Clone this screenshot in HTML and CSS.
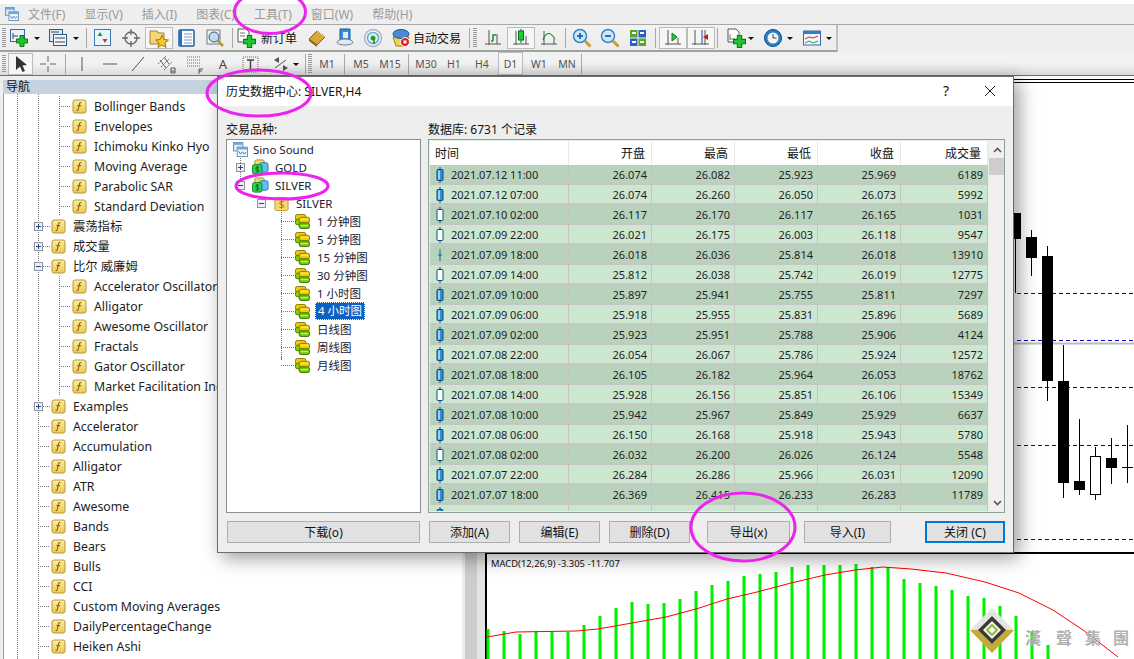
FILE: index.html
```html
<!DOCTYPE html>
<html lang="zh">
<head>
<meta charset="utf-8">
<title>MetaTrader</title>
<link rel="stylesheet" href="styles.css">
</head>
<body>
<svg class="defs" width="0" height="0">
  <defs><linearGradient id="gold" x1="0" y1="0" x2="0" y2="1"><stop offset="0" stop-color="#fbeea0"/><stop offset="1" stop-color="#ecc94e"/></linearGradient></defs>
  <symbol id="fx" viewBox="0 0 15 15"><rect x="1" y="1" width="13" height="13" rx="2" fill="url(#gold)" stroke="#b8963a"/><path d="M9.500 3.700C8 3 7.600 4 7.300 5.500L6.400 10C6.200 11.300 5.600 11.700 4.600 11.300M5.500 6.600H9" fill="none" stroke="#8a6414" stroke-width="1.100"/></symbol>
  <symbol id="plus" viewBox="0 0 9 9"><rect x=".5" y=".5" width="8" height="8" fill="#eef0f4" stroke="#8d949c"/><path d="M2 4.500H7M4.500 2V7" stroke="#28408c"/></symbol>
  <symbol id="minus" viewBox="0 0 9 9"><rect x=".5" y=".5" width="8" height="8" fill="#eef0f4" stroke="#8d949c"/><path d="M2 4.500H7" stroke="#28408c"/></symbol>
  <symbol id="db" viewBox="0 0 16 16"><rect x=".5" y=".5" width="11" height="6" rx="2" fill="#f0cc00" stroke="#8a7400"/><rect x=".5" y="5.500" width="11" height="6" rx="2" fill="#80d000" stroke="#4c7a00"/><rect x="4.500" y="3.500" width="11" height="6" rx="2" fill="#f0cc00" stroke="#8a7400"/><path d="M6 5.500H14" stroke="#fff0a0"/><rect x="4.500" y="9.500" width="11" height="6" rx="2" fill="#70c800" stroke="#3f7000"/><path d="M6 12.500H14" stroke="#e0f8b0"/></symbol>
  <symbol id="multi" viewBox="0 0 18 16"><rect x="3" y="0.500" width="10" height="9" rx="2" fill="#f3d970" stroke="#a58a30"/><rect x="8" y="3.500" width="9" height="10" rx="2" fill="#5cc0f0" stroke="#2878b0"/><rect x="0.500" y="5.500" width="10" height="10" rx="2" fill="#30d050" stroke="#108030"/><path d="M7.400 8.400C6 7.500 4 8 4 9.300C4 11 7.400 10 7.400 11.900C7.400 13 5.300 13.400 3.800 12.600M5.500 7V14" fill="none" stroke="#063"/></symbol>
  <symbol id="dollar" viewBox="0 0 16 16"><path d="M3 1.500H13V3.500H15V14C15 15 14 15.500 13 15.500H3C2 15.500 1 15 1 14V3.500H3Z" fill="#f8d868" stroke="#c09a30"/><path d="M10.500 6.500C9 5.500 6 6 6 7.800C6 10 10.500 8.800 10.500 11C10.500 12.500 7.500 12.800 5.800 11.800M8 5V13.500" fill="none" stroke="#a07010"/></symbol>
  <symbol id="srv" viewBox="0 0 16 16"><rect x=".5" y=".5" width="10" height="9" fill="#dcecf8" stroke="#5a90c0"/><rect x=".5" y=".5" width="10" height="2.500" fill="#70a8dc"/><rect x="4.500" y="5.500" width="11" height="10" fill="#f0f6fc" stroke="#5a90c0"/><rect x="4.500" y="5.500" width="11" height="2.500" fill="#70a8dc"/><path d="M6 10L8 13L10 10.500L12 13L14 10.500" fill="none" stroke="#4070a0"/></symbol>
  <symbol id="cb" viewBox="0 0 8 16"><path d="M4 0V16" stroke="#0b4a78"/><rect x="1" y="2.500" width="6" height="11" rx="1" fill="#2f8fd8" stroke="#0b4a78"/><rect x="2" y="3.500" width="2" height="9" fill="#9fd0f4"/></symbol>
  <symbol id="cw" viewBox="0 0 8 16"><path d="M4 0V16" stroke="#0b4a78"/><rect x="1" y="2.500" width="6" height="11" rx="1" fill="#fff" stroke="#0b4a78"/></symbol>
  <symbol id="cd" viewBox="0 0 8 16"><path d="M4 2V14M2 8H6" stroke="#0b6a98"/></symbol>
  <symbol id="gplus" viewBox="0 0 12 12"><path d="M4 .5H8V4H11.500V8H8V11.500H4V8H.5V4H4Z" fill="#1fc42f" stroke="#0a7a1a"/></symbol>
</svg>

<div class="app">
  <div class="strip"></div>
  <div class="menu">
    <svg class="appico"><use href="#srv"/></svg>
    <span>文件(F)</span><span>显示(V)</span><span>插入(I)</span><span>图表(C)</span><span>工具(T)</span><span>窗口(W)</span><span>帮助(H)</span>
  </div>

  <div class="tb1">
    <div class="bar1">
      <i class="grip"></i>
      <div class="ti w22"><svg class="ic" viewBox="0 0 20 20"><rect x="1.500" y="1.500" width="14" height="12" fill="#e8f0f8" stroke="#3a6ea0"/><path d="M4 8H9M4 5V11" stroke="#444"/><use href="#gplus" x="7" y="7" width="12" height="12"/></svg></div>
      <div class="ta w14"></div>
      <div class="ti"><svg class="ic" viewBox="0 0 20 20"><rect x="1.500" y="1.500" width="13" height="12" fill="#dceaf8" stroke="#2a5a90"/><rect x="5.500" y="6.500" width="13" height="11" fill="#f0f6fc" stroke="#2a5a90"/><path d="M3 4H11M7 10H17M7 14H17" stroke="#444"/></svg></div>
      <div class="ta w8"></div>
      <i class="sep ml6"></i>
      <div class="ti ml2"><svg class="ic" viewBox="0 0 20 20"><rect x="1.500" y="1.500" width="16" height="16" fill="#eaf4fc" stroke="#3a7ab8"/><path d="M7 4L4.500 8H9.500Z" fill="#18a030"/><path d="M12 15L9.500 11H14.500Z" fill="#d83020"/></svg></div>
      <div class="ti"><svg class="ic" viewBox="0 0 20 20"><circle cx="10" cy="10" r="6" fill="none" stroke="#666" stroke-width="1.300"/><path d="M10 1V7M10 13V19M1 10H7M13 10H19" stroke="#666" stroke-width="1.300"/></svg></div>
      <div class="ti on"><svg class="ic" viewBox="0 0 20 20"><path d="M1 3H8L9 5H15V16H1Z" fill="#f4d878" stroke="#a08030"/><path d="M13 7L15 11.500L19.500 12L16 15L17 19.500L13 17L9 19.500L10 15L6.500 12L11 11.500Z" fill="#f6c830" stroke="#a07810"/></svg></div>
      <div class="ti"><svg class="ic" viewBox="0 0 20 20"><rect x="2" y="2" width="15" height="16" rx="1" fill="#fff" stroke="#1a5ca8" stroke-width="1.500"/><rect x="2" y="2" width="3" height="16" fill="#2a70c0"/><path d="M7 6H15M7 9H15M7 12H15M7 15H15" stroke="#7a9ac0"/></svg></div>
      <div class="ti"><svg class="ic" viewBox="0 0 20 20"><rect x="2" y="2" width="13" height="14" fill="#eef2f6" stroke="#778"/><circle cx="9" cy="9" r="5" fill="#bcdcf0" stroke="#456"/><path d="M12.500 12.500L18 18" stroke="#b89a30" stroke-width="2.500"/></svg></div>
      <i class="sep ml3"></i>
      <div class="ti w22 ml2"><svg class="ic" viewBox="0 0 20 20"><path d="M2 1H10L13 4V14H2Z" fill="#fff" stroke="#555"/><path d="M4 5H9M4 8H9" stroke="#777"/><use href="#gplus" x="7" y="7" width="13" height="13"/></svg></div>
      <span class="tx ml4 w36">新订单</span>
      <div class="ti ml6"><svg class="ic" viewBox="0 0 20 20"><path d="M2 11L10 3L18 9L10 17Z" fill="#d8a838" stroke="#7a5a10"/><path d="M2 11L10 17V19L2 13Z" fill="#8a6414"/><path d="M10 3L18 9" stroke="#f4dc90"/></svg></div>
      <div class="ti"><svg class="ic" viewBox="0 0 20 20"><path d="M5 1H15V13H5Z" fill="#3a8ad8" stroke="#1a5a98"/><rect x="8" y="4" width="5" height="6" fill="#dceefa"/><path d="M2 14C4 10 16 10 18 14C18 18 2 18 2 14Z" fill="#e0e8f0" stroke="#708090"/></svg></div>
      <div class="ti"><svg class="ic" viewBox="0 0 20 20"><circle cx="10" cy="10" r="8.500" fill="none" stroke="#a8b8c8" stroke-width="1.500"/><circle cx="10" cy="10" r="5.500" fill="none" stroke="#60b0d0" stroke-width="1.500"/><circle cx="10" cy="10" r="2.500" fill="#28a040"/><path d="M11 10V16" stroke="#208030" stroke-width="1.500"/></svg></div>
      <div class="ti w22 ml3"><svg class="ic" viewBox="0 0 20 20"><path d="M2 9H18L15 18H5Z" fill="#f4d050" stroke="#a08020"/><ellipse cx="10" cy="6" rx="8" ry="4.500" fill="#4a8ad0" stroke="#205a98"/><circle cx="14" cy="14" r="4.500" fill="#e02020" stroke="#fff"/><rect x="12.500" y="12.500" width="3" height="3" fill="#fff"/></svg></div>
      <span class="tx ml1 w48">自动交易</span>
      <i class="sep ml8"></i>
      <i class="grip ml3"></i>
      <div class="ti ml0"><svg class="ic" viewBox="0 0 20 20"><path d="M6 2V17M2 16H18M14 6V16" stroke="#555" fill="none"/><path d="M10 13V7H13M10 13H8" stroke="#1a8a30" stroke-width="1.500" fill="none"/></svg></div>
      <div class="ti on"><svg class="ic" viewBox="0 0 20 20"><path d="M5 3V17M2 16H18M15 8V16" stroke="#555" fill="none"/><path d="M10 1V15" stroke="#0a6a20"/><rect x="7.500" y="3" width="5" height="9" fill="#18d038" stroke="#0a6a20"/></svg></div>
      <div class="ti"><svg class="ic" viewBox="0 0 20 20"><path d="M5 3V17M2 16H18M15 11V16" stroke="#555" fill="none"/><path d="M4 12C7 4 11 3 16 11" stroke="#1a8a30" stroke-width="1.200" fill="none"/></svg></div>
      <i class="sep ml2"></i>
      <div class="ti ml2"><svg class="ic" viewBox="0 0 20 20"><circle cx="8" cy="8" r="6.500" fill="#cfe6f8" stroke="#3a86c8" stroke-width="1.500"/><path d="M5 8H11M8 5V11" stroke="#2a70b8" stroke-width="2"/><path d="M13 13L18.500 18.500" stroke="#c8a030" stroke-width="3"/></svg></div>
      <div class="ti"><svg class="ic" viewBox="0 0 20 20"><circle cx="8" cy="8" r="6.500" fill="#cfe6f8" stroke="#3a86c8" stroke-width="1.500"/><path d="M5 8H11" stroke="#2a70b8" stroke-width="2"/><path d="M13 13L18.500 18.500" stroke="#c8a030" stroke-width="3"/></svg></div>
      <div class="ti"><svg class="ic" viewBox="0 0 20 20"><rect x="2" y="2" width="7.500" height="7.500" fill="#58a828"/><rect x="10.500" y="2" width="7.500" height="7.500" fill="#2a60c8"/><rect x="2" y="10.500" width="7.500" height="7.500" fill="#2a60c8"/><rect x="10.500" y="10.500" width="7.500" height="7.500" fill="#58a828"/><path d="M4 5H8M12 5H16M4 14H8M12 14H16" stroke="#fff" stroke-width="2"/></svg></div>
      <i class="sep ml3"></i>
      <div class="ti on ml3"><svg class="ic" viewBox="0 0 20 20"><path d="M5 2V17M2 16H18M15 10V16" stroke="#555" fill="none"/><path d="M9 5L14 9L9 13Z" fill="#30c040" stroke="#187a28"/></svg></div>
      <div class="ti on"><svg class="ic" viewBox="0 0 20 20"><path d="M4 2V17M1 16H18M14 2V17" stroke="#555" fill="none"/><path d="M11 2V16" stroke="#2040a0"/><path d="M12 9L17 6V12Z" fill="#c82010"/></svg></div>
      <i class="sep ml2"></i>
      <div class="ti w22 ml7"><svg class="ic" viewBox="0 0 20 20"><path d="M2 1H10L13 4V14H2Z" fill="#fff" stroke="#555"/><path d="M4 6V12M4 11H9" stroke="#777"/><use href="#gplus" x="7" y="7" width="13" height="13"/></svg></div>
      <div class="ta w8"></div>
      <div class="ti w22 ml7"><svg class="ic" viewBox="0 0 20 20"><circle cx="10" cy="10" r="8.500" fill="#2a80c8" stroke="#0a4a88"/><circle cx="10" cy="10" r="5.500" fill="#f4f4f4"/><path d="M10 6V10H13.500" stroke="#444" fill="none"/></svg></div>
      <div class="ta w12"></div>
      <div class="ti w22 ml5"><svg class="ic" viewBox="0 0 20 20"><rect x="1.500" y="3" width="17" height="14" fill="#f2f6fa" stroke="#3a6aa0"/><rect x="1.500" y="3" width="17" height="3" fill="#3a7ac8"/><path d="M3 11L7 9L11 10L16 8" stroke="#c83020" fill="none"/><path d="M3 15L7 13L11 15L16 13" stroke="#30a040" fill="none"/></svg></div>
      <div class="ta w12"></div>
    </div>
  </div>

  <div class="tb2">
    <i class="grip g2"></i>
    <div class="ti w25 on"><svg class="ic" viewBox="0 0 20 20"><path d="M5 2L5 16L9 12.500L11.500 18L14 17L11.500 11.500L16 11Z" fill="#333"/></svg></div>
    <div class="ti ml1"><svg class="ic" viewBox="0 0 20 20"><path d="M10 2V8M10 12V18M2 10H8M12 10H18" stroke="#666"/></svg></div>
    <i class="sep ml3"></i>
    <div class="ti ml2"><svg class="ic" viewBox="0 0 20 20"><path d="M10 3V17" stroke="#555"/></svg></div>
    <div class="ti"><svg class="ic" viewBox="0 0 20 20"><path d="M3 10H17" stroke="#555"/></svg></div>
    <div class="ti"><svg class="ic" viewBox="0 0 20 20"><path d="M4 17L16 3" stroke="#555"/></svg></div>
    <div class="ti ml1"><svg class="ic" viewBox="0 0 20 20"><path d="M1 10L9 2M4 13L12 5M7 16L15 8" stroke="#666" stroke-dasharray="2 1"/><path d="M3 6L9 14M7 3L12 10" stroke="#666"/><path d="M14 17H18M14 14H18V19H14Z" fill="none" stroke="#555"/></svg></div>
    <div class="ti"><svg class="ic" viewBox="0 0 20 20"><path d="M2 3H16M2 6H16M2 9H16M2 12H16" stroke="#666" stroke-dasharray="1 1"/><path d="M14 15H18M14 15V20M14 17H17" fill="none" stroke="#555"/></svg></div>
    <div class="ti glyph">A</div>
    <div class="ti"><svg class="ic" viewBox="0 0 20 20"><rect x="2" y="3" width="15" height="15" fill="none" stroke="#666" stroke-dasharray="1 1"/><path d="M6 6H13M9.500 6V15" stroke="#444" stroke-width="1.500"/></svg></div>
    <div class="ti w20 ml6"><svg class="ic" viewBox="0 0 20 20"><path d="M3 6L8 3L8 9ZM12 11L17 14L12 17Z" fill="#555"/><path d="M4 14L15 6" stroke="#555"/></svg></div>
    <div class="ta w10"></div>
    <i class="sep ml4"></i>
    <i class="grip gn ml2"></i>
    <div class="tf ml1">M1</div>
    <i class="sep ml3"></i>
    <div class="tf ml2">M5</div>
    <div class="tf ml1">M15</div>
    <i class="sep ml4"></i>
    <div class="tf ml3">M30</div>
    <div class="tf">H1</div>
    <div class="tf">H4</div>
    <div class="tf w25 on ml2">D1</div>
    <div class="tf ml2">W1</div>
    <div class="tf">MN</div>
    <i class="sep"></i>
  </div>

  <div class="main">
    <aside class="nav">
      <div class="navhead">导航</div>
      <div class="tree">
        <div class="row child"><svg class="fx"><use href="#fx"/></svg><span>Bollinger Bands</span></div>
        <div class="row child"><svg class="fx"><use href="#fx"/></svg><span>Envelopes</span></div>
        <div class="row child"><svg class="fx"><use href="#fx"/></svg><span>Ichimoku Kinko Hyo</span></div>
        <div class="row child"><svg class="fx"><use href="#fx"/></svg><span>Moving Average</span></div>
        <div class="row child"><svg class="fx"><use href="#fx"/></svg><span>Parabolic SAR</span></div>
        <div class="row child"><svg class="fx"><use href="#fx"/></svg><span>Standard Deviation</span></div>
        <div class="row group"><svg class="ex"><use href="#plus"/></svg><svg class="fx"><use href="#fx"/></svg><span>震荡指标</span></div>
        <div class="row group"><svg class="ex"><use href="#plus"/></svg><svg class="fx"><use href="#fx"/></svg><span>成交量</span></div>
        <div class="row group"><svg class="ex"><use href="#minus"/></svg><svg class="fx"><use href="#fx"/></svg><span>比尔 威廉姆</span></div>
        <div class="row child"><svg class="fx"><use href="#fx"/></svg><span>Accelerator Oscillator</span></div>
        <div class="row child"><svg class="fx"><use href="#fx"/></svg><span>Alligator</span></div>
        <div class="row child"><svg class="fx"><use href="#fx"/></svg><span>Awesome Oscillator</span></div>
        <div class="row child"><svg class="fx"><use href="#fx"/></svg><span>Fractals</span></div>
        <div class="row child"><svg class="fx"><use href="#fx"/></svg><span>Gator Oscillator</span></div>
        <div class="row child"><svg class="fx"><use href="#fx"/></svg><span>Market Facilitation Index</span></div>
        <div class="row group"><svg class="ex"><use href="#plus"/></svg><svg class="fx"><use href="#fx"/></svg><span>Examples</span></div>
        <div class="row leaf"><svg class="fx"><use href="#fx"/></svg><span>Accelerator</span></div>
        <div class="row leaf"><svg class="fx"><use href="#fx"/></svg><span>Accumulation</span></div>
        <div class="row leaf"><svg class="fx"><use href="#fx"/></svg><span>Alligator</span></div>
        <div class="row leaf"><svg class="fx"><use href="#fx"/></svg><span>ATR</span></div>
        <div class="row leaf"><svg class="fx"><use href="#fx"/></svg><span>Awesome</span></div>
        <div class="row leaf"><svg class="fx"><use href="#fx"/></svg><span>Bands</span></div>
        <div class="row leaf"><svg class="fx"><use href="#fx"/></svg><span>Bears</span></div>
        <div class="row leaf"><svg class="fx"><use href="#fx"/></svg><span>Bulls</span></div>
        <div class="row leaf"><svg class="fx"><use href="#fx"/></svg><span>CCI</span></div>
        <div class="row leaf"><svg class="fx"><use href="#fx"/></svg><span>Custom Moving Averages</span></div>
        <div class="row leaf"><svg class="fx"><use href="#fx"/></svg><span>DailyPercentageChange</span></div>
        <div class="row leaf"><svg class="fx"><use href="#fx"/></svg><span>Heiken Ashi</span></div>
      </div>
    </aside>
    <div class="gutter"></div>
    <svg class="chart" viewBox="485 76 649 583" width="649" height="583">
      <path d="M485 79.500H1134M485 82.500H1134" stroke="#000"/>
      <path d="M485 343.500H1134" stroke="#bbb" stroke-width="2"/>
      <path d="M486 80V659" stroke="#000" stroke-width="2"/>
      <path d="M485 293.500H1134M485 340.500H1134M485 387.500H1134M485 445.500H1134M485 539.500H1134" stroke="#0000c0" stroke-dasharray="4 3"/>
      <path d="M1015.500 239V293M1031.500 230V276M1047.500 246V401M1063.500 345V498M1079.500 419V495M1095.500 447V500M1111.500 438V484M1127.500 425V483M1122 467.500H1133" stroke="#000"/>
      <path d="M1013 213H1021V239H1013ZM1026 237H1037V258H1026ZM1042 256H1053V381H1042ZM1058 381H1069V483H1058ZM1074 481H1085V490H1074ZM1106 458H1117V468H1106Z" fill="#000"/>
      <rect x="1090.500" y="456.500" width="10" height="38" fill="#fff" stroke="#000"/>
      <path d="M485 553H1134" stroke="#000" stroke-width="2"/>
      <text class="macd" x="491" y="567">MACD(12,26,9) -3.305 -11.707</text>
      <path d="M488 629V659M504 631V659M520 634V659M536 632V659M552 632V659M568 632V659M584 625V659M600 616V659M616 608V659M632 602V659M648 604V659M664 603V659M680 599V659M696 591V659M712 585V659M728 581V659M744 576V659M760 574V659M776 572V659M792 567V659M808 565V659M824 565V659M840 565V659M856 564V659M872 567V659M888 567V659M904 579V659M920 583V659M936 586V659M952 590V659M968 596V659M984 598V659M1000 606V659M1016 616V659M1032 632V659M1048 645V659" stroke="#00f000" stroke-width="3"/>
      <polyline points="487,637 516,632 576,631 598,629 632,623 666,617 696,609 727,599 757,592 791,583 825,575 855,570 883,567 911,569 946,573 985,582 1019,593 1053,610 1083,630 1118,657" fill="none" stroke="#ff0000"/>
      <polygon points="992,608 1014,630 992,653 970,630" fill="#e4e4e0"/>
      <polygon points="970,630 992,653 1014,630 1006,630 992,644 978,630" fill="#c8a838"/>
      <polygon points="992,616 1006,630 992,644 978,630" fill="#3a3a34"/>
      <polygon points="992,621 1001,630 992,639 983,630" fill="#f4f4ec"/>
      <polygon points="992,625 997,630 992,635 987,630" fill="none" stroke="#8cb43c" stroke-width="1.800"/>
      <text class="wm" x="1025" y="644">漢</text>
      <text class="wm" x="1056" y="644">聲</text>
      <text class="wm" x="1085" y="644">集</text>
      <text class="wm" x="1113" y="644">團</text>
    </svg>
  </div>
</div>

<section class="dialog">
  <header class="dtitle"><span>历史数据中心: SILVER,H4</span><span class="help">?</span>
    <svg class="close" viewBox="0 0 12 12"><path d="M1 1L11 11M11 1L1 11" stroke="#222"/></svg></header>
  <div class="dbody">
    <div class="cols">
      <div class="col-l">
        <div class="lbl">交易品种:</div>
        <div class="dtree">
          <div class="tr t0"><svg class="i16"><use href="#srv"/></svg><span>Sino Sound</span></div>
          <div class="tr t1"><svg class="ex"><use href="#plus"/></svg><svg class="i18"><use href="#multi"/></svg><span>GOLD</span></div>
          <div class="tr t1"><svg class="ex"><use href="#minus"/></svg><svg class="i18"><use href="#multi"/></svg><span>SILVER</span></div>
          <div class="tr t2"><svg class="ex"><use href="#minus"/></svg><svg class="i16"><use href="#dollar"/></svg><span>SILVER</span></div>
          <div class="tr t3"><svg class="i16"><use href="#db"/></svg><span>1 分钟图</span></div>
          <div class="tr t3"><svg class="i16"><use href="#db"/></svg><span>5 分钟图</span></div>
          <div class="tr t3"><svg class="i16"><use href="#db"/></svg><span>15 分钟图</span></div>
          <div class="tr t3"><svg class="i16"><use href="#db"/></svg><span>30 分钟图</span></div>
          <div class="tr t3"><svg class="i16"><use href="#db"/></svg><span>1 小时图</span></div>
          <div class="tr t3"><svg class="i16"><use href="#db"/></svg><span class="sel">4 小时图</span></div>
          <div class="tr t3"><svg class="i16"><use href="#db"/></svg><span>日线图</span></div>
          <div class="tr t3"><svg class="i16"><use href="#db"/></svg><span>周线图</span></div>
          <div class="tr t3 last"><svg class="i16"><use href="#db"/></svg><span>月线图</span></div>
        </div>
      </div>
      <div class="col-r">
        <div class="lbl">数据库: 6731 个记录</div>
        <div class="tablebox">
          <div class="tablewrap">
            <table class="grid">
              <thead><tr><th class="c1">时间</th><th class="c2">开盘</th><th class="c2">最高</th><th class="c2">最低</th><th class="c2">收盘</th><th class="c3">成交量</th></tr></thead>
              <tbody>
                <tr><td><svg class="cand"><use href="#cb"/></svg>2021.07.12 11:00</td><td>26.074</td><td>26.082</td><td>25.923</td><td>25.969</td><td>6189</td></tr>
                <tr><td><svg class="cand"><use href="#cb"/></svg>2021.07.12 07:00</td><td>26.074</td><td>26.260</td><td>26.050</td><td>26.073</td><td>5992</td></tr>
                <tr><td><svg class="cand"><use href="#cw"/></svg>2021.07.10 02:00</td><td>26.117</td><td>26.170</td><td>26.117</td><td>26.165</td><td>1031</td></tr>
                <tr><td><svg class="cand"><use href="#cw"/></svg>2021.07.09 22:00</td><td>26.021</td><td>26.175</td><td>26.003</td><td>26.118</td><td>9547</td></tr>
                <tr><td><svg class="cand"><use href="#cd"/></svg>2021.07.09 18:00</td><td>26.018</td><td>26.036</td><td>25.814</td><td>26.018</td><td>13910</td></tr>
                <tr><td><svg class="cand"><use href="#cw"/></svg>2021.07.09 14:00</td><td>25.812</td><td>26.038</td><td>25.742</td><td>26.019</td><td>12775</td></tr>
                <tr><td><svg class="cand"><use href="#cb"/></svg>2021.07.09 10:00</td><td>25.897</td><td>25.941</td><td>25.755</td><td>25.811</td><td>7297</td></tr>
                <tr><td><svg class="cand"><use href="#cb"/></svg>2021.07.09 06:00</td><td>25.918</td><td>25.955</td><td>25.831</td><td>25.896</td><td>5689</td></tr>
                <tr><td><svg class="cand"><use href="#cb"/></svg>2021.07.09 02:00</td><td>25.923</td><td>25.951</td><td>25.788</td><td>25.906</td><td>4124</td></tr>
                <tr><td><svg class="cand"><use href="#cb"/></svg>2021.07.08 22:00</td><td>26.054</td><td>26.067</td><td>25.786</td><td>25.924</td><td>12572</td></tr>
                <tr><td><svg class="cand"><use href="#cb"/></svg>2021.07.08 18:00</td><td>26.105</td><td>26.182</td><td>25.964</td><td>26.053</td><td>18762</td></tr>
                <tr><td><svg class="cand"><use href="#cw"/></svg>2021.07.08 14:00</td><td>25.928</td><td>26.156</td><td>25.851</td><td>26.106</td><td>15349</td></tr>
                <tr><td><svg class="cand"><use href="#cb"/></svg>2021.07.08 10:00</td><td>25.942</td><td>25.967</td><td>25.849</td><td>25.929</td><td>6637</td></tr>
                <tr><td><svg class="cand"><use href="#cb"/></svg>2021.07.08 06:00</td><td>26.150</td><td>26.168</td><td>25.918</td><td>25.943</td><td>5780</td></tr>
                <tr><td><svg class="cand"><use href="#cw"/></svg>2021.07.08 02:00</td><td>26.032</td><td>26.200</td><td>26.026</td><td>26.124</td><td>5548</td></tr>
                <tr><td><svg class="cand"><use href="#cb"/></svg>2021.07.07 22:00</td><td>26.284</td><td>26.286</td><td>25.966</td><td>26.031</td><td>12090</td></tr>
                <tr><td><svg class="cand"><use href="#cb"/></svg>2021.07.07 18:00</td><td>26.369</td><td>26.415</td><td>26.233</td><td>26.283</td><td>11789</td></tr>
                <tr><td><svg class="cand"><use href="#cb"/></svg></td><td></td><td></td><td></td><td></td><td></td></tr>
              </tbody>
            </table>
          </div>
          <div class="scroll">
            <svg class="sa" viewBox="0 0 9 6"><path d="M1 5L4.500 1.500L8 5" fill="none" stroke="#555" stroke-width="1.600"/></svg>
            <div class="thumb"></div>
            <svg class="sa down" viewBox="0 0 9 6"><path d="M1 1L4.500 4.500L8 1" fill="none" stroke="#555" stroke-width="1.600"/></svg>
          </div>
        </div>
      </div>
    </div>
    <div class="btns">
      <button class="b-dl">下载(o)</button>
      <button class="b-m ml9">添加(A)</button>
      <button class="b-m ml9">编辑(E)</button>
      <button class="b-m ml9">删除(D)</button>
      <button class="b-x">导出(x)</button>
      <button class="b-i">导入(I)</button>
      <button class="b-c">关闭 (C)</button>
    </div>
  </div>
</section>

<svg class="marks" width="1134" height="659">
  <ellipse cx="270" cy="12" rx="35.500" ry="21.500"/>
  <ellipse cx="259" cy="93" rx="52" ry="23"/>
  <ellipse cx="282" cy="186" rx="46" ry="13"/>
  <ellipse cx="743" cy="527" rx="52" ry="34"/>
</svg>
</body>
</html>
```
FILE: styles.css
```css
* { box-sizing: border-box; }
html, body { margin: 0; padding: 0; }
body { width: 1134px; height: 659px; overflow: hidden; position: relative; background: #fff; font: 12px "Noto Sans", "Noto Sans CJK SC", sans-serif; color: #111; }
.defs { position: absolute; }
.app { display: flex; flex-direction: column; height: 659px; }
.strip { height: 4px; background: #fff; }

.menu { height: 20px; background: #eee; display: flex; align-items: center; gap: 19px; color: #9a9a9a; font-size: 12px; padding-left: 5px; }
.appico { width: 14px; height: 14px; margin-right: -10px; }

.tb1 { height: 28px; background: #eee; border-top: 1px solid #a8a8a8; }
.bar1 { width: 838px; height: 27px; display: flex; align-items: center; padding-left: 2px; border-bottom: 2px solid #9aa59c; border-right: 2px solid #b8c8b8; background: linear-gradient(#f2f2f2, #ececec); }
.tb2 { height: 24px; display: flex; align-items: center; padding-left: 2px; background: linear-gradient(#f2f2f2 50%, #dcdcdc); border-bottom: 1px solid #6e6e6e; }

.grip { width: 4px; height: 19px; margin-right: 2px; background: repeating-linear-gradient(#999 0 1px, transparent 1px 2px); flex: none; }
.g2 { height: 18px; }
.gn { margin-right: 0; }
.ti { width: 28px; height: 22px; display: flex; align-items: center; justify-content: center; flex: none; }
.ti.on, .tf.on { background: #f6f6f6; border: 1px solid #bcbcbc; }
.ic { width: 20px; height: 20px; }
.glyph { font-size: 13px; color: #444; }
.ta { height: 22px; flex: none; position: relative; }
.ta::after { content: ""; position: absolute; left: 50%; top: 10px; margin-left: -3px; border: 3px solid transparent; border-top: 3px solid #111; }
.sep { width: 1px; height: 20px; background: #a8a8a8; flex: none; }
.tx { font-size: 12px; color: #111; white-space: nowrap; flex: none; }
.tf { width: 28px; height: 23px; display: flex; align-items: center; justify-content: center; font-size: 10.500px; color: #555; flex: none; }

.w8 { width: 8px; } .w10 { width: 10px; } .w12 { width: 12px; } .w14 { width: 14px; } .w20 { width: 20px; } .w22 { width: 22px; } .w25 { width: 25px; } .w36 { width: 36px; } .w48 { width: 48px; }
.ml0 { margin-left: 0; } .ml1 { margin-left: 1px; } .ml2 { margin-left: 2px; } .ml3 { margin-left: 3px; } .ml4 { margin-left: 4px; } .ml5 { margin-left: 5px; } .ml6 { margin-left: 6px; } .ml7 { margin-left: 7px; } .ml8 { margin-left: 8px; } .ml9 { margin-left: 9px; }

.main { flex: 1; display: flex; min-height: 0; }
.nav { width: 462px; flex: none; background: #eee; padding: 4px 0 0 3px; display: flex; flex-direction: column; overflow: hidden; }
.navhead { height: 14px; line-height: 14px; background: #c5d2df; padding-left: 3px; font-size: 12px; flex: none; }
.tree { flex: 1; background-color: #fff; border-left: 1px solid #9a9a9a; padding-top: 2px;
  background-image: linear-gradient(#777 50%, transparent 50%), linear-gradient(#777 50%, transparent 50%);
  background-size: 1px 2px, 1px 2px; background-repeat: repeat-y; background-position: 13px 0, 34px 0; }
.row { height: 20px; display: flex; align-items: center; font-size: 12.300px; white-space: nowrap; color: #1c1c1c; }
.row span { margin-left: 7px; }
.fx { width: 15px; height: 15px; flex: none; }
.ex { width: 9px; height: 9px; flex: none; }
.child { padding-left: 68px; background-image: linear-gradient(#777 50%, transparent 50%), repeating-linear-gradient(90deg, #777 0 1px, transparent 1px 2px); background-size: 1px 2px, 12px 1px; background-repeat: repeat-y, no-repeat; background-position: 55px 0, 55px 10px; }
.group { padding-left: 30px; background-image: repeating-linear-gradient(90deg, #777 0 1px, transparent 1px 2px); background-size: 8px 1px; background-repeat: no-repeat; background-position: 39px 10px; }
.group .fx { margin-left: 8px; }
.leaf { padding-left: 47px; background-image: repeating-linear-gradient(90deg, #777 0 1px, transparent 1px 2px); background-size: 12px 1px; background-repeat: no-repeat; background-position: 34px 10px; }

.gutter { width: 23px; flex: none; background: linear-gradient(90deg, #eee 0 3px, #ccc 3px 15px, #e4e4e4 15px); }
.chart { flex: none; display: block; background: #fff; }
.macd { font: 9.400px "Noto Sans", sans-serif; fill: #111; }
.wm { font: 700 16px "Noto Sans CJK TC", sans-serif; fill: #b0b0b0; }

.dialog { position: absolute; left: 217px; top: 76px; width: 797px; height: 477px; background: #eee; border: 1px solid #6b6b6b; box-shadow: 5px 5px 18px rgba(0, 0, 0, .4); display: flex; flex-direction: column; }
.dtitle { height: 29px; background: #fff; display: flex; align-items: center; padding: 0 0 2px 8px; font-size: 12px; position: relative; flex: none; }
.dtitle > span:first-child { flex: 1; }
.help { font-size: 14px; margin-right: 35px; }
.close { width: 12px; height: 12px; margin-right: 17px; }
.dbody { flex: 1; display: flex; flex-direction: column; padding-left: 8px; }
.cols { display: flex; gap: 7px; }
.col-l { width: 195px; flex: none; }
.col-r { width: 577px; flex: none; }
.lbl { height: 33px; display: flex; align-items: flex-end; padding-bottom: 1px; font-size: 12px; }
.dtree { height: 374px; background: #fff; border: 1px solid #8a9090; overflow: hidden; }
.tr { height: 18px; display: flex; align-items: center; font-size: 11.500px; white-space: nowrap; color: #1a2030; background-repeat: no-repeat; }
.tr span { margin-left: 5px; }
.i16 { width: 15px; height: 15px; flex: none; }
.i18 { width: 17px; height: 16px; flex: none; }
.t0 { padding-left: 6px; }
.t1 { padding-left: 9px; background-image: linear-gradient(#777 50%, transparent 50%); background-size: 1px 2px; background-position: 13px 0; background-repeat: repeat-y; }
.t1 .i18 { margin-left: 7px; }
.t1 span { margin-left: 6px; }
.t2 { padding-left: 30px; }
.t2 .i16 { margin-left: 8px; }
.t2 span { margin-left: 7px; }
.t3 { padding-left: 68px; background-image: linear-gradient(#777 50%, transparent 50%), repeating-linear-gradient(90deg, #777 0 1px, transparent 1px 2px); background-size: 1px 2px, 14px 1px; background-repeat: repeat-y, no-repeat; background-position: 54px 0, 54px 9px; }
.t3.last { background-size: 1px 9px, 14px 1px; background-repeat: no-repeat; }
.t3 span { margin-left: 6px; padding: 0 1px; }
.sel { background: #0a62c4; color: #fff; height: 18px; line-height: 18px; outline: 1px dotted #fff; outline-offset: -1px; margin-left: 5px !important; padding: 0 3px !important; }

.tablebox { height: 374px; width: 577px; border: 1px solid #8fa096; padding: 1px; background: #e4f2e6; display: flex; overflow: hidden; }
.tablewrap { width: 558px; flex: none; overflow: hidden; }
.grid { border-collapse: separate; border-spacing: 0; table-layout: fixed; width: 558px; font-size: 11px; color: #1e1e28; }
.grid th { height: 24px; background: #fff; font-weight: 400; font-size: 12px; color: #111; text-align: right; padding: 0 6px 0 0; border-right: 1px solid #e8e8e8; }
.c1 { width: 139px; text-align: left !important; padding-left: 5px !important; }
.c2 { width: 83px; }
.c3 { width: 87px; }
.grid td { height: 20px; padding: 2px 4px 0 0; text-align: right; border-right: 1px solid #c4c4c4; border-bottom: 2px solid #c6c6c6; white-space: nowrap; line-height: 16px; }
.grid td:first-child { text-align: left; padding-left: 6px; }
.grid tr:nth-child(odd) td { background: #b9d2bb; }
.grid tr:nth-child(even) td { background: #cce6d0; }
.cand { width: 8px; height: 16px; vertical-align: top; margin-right: 7px; }
.scroll { width: 16px; flex: none; background: #f0f0f0; position: relative; display: flex; flex-direction: column; align-items: center; margin-left: 1px; }
.sa { width: 9px; height: 6px; margin-top: 6px; flex: none; }
.thumb { width: 16px; height: 17px; background: #cdcdcd; margin-top: 5px; }
.sa.down { margin-top: auto; margin-bottom: 5px; }

.btns { display: flex; margin-top: 8px; padding-left: 1px; }
.btns button { height: 22px; background: #e1e1e1; border: 1px solid #adadad; font: 12px "Noto Sans", "Noto Sans CJK SC", sans-serif; color: #111; padding: 0; }
.b-dl { width: 193px; }
.b-m { width: 81px; }
.b-x { width: 83px; margin-left: 17px; }
.b-i { width: 87px; margin-left: 14px; }
.btns .b-c { width: 80px; margin-left: 34px; border: 2px solid #0078d7; }

.marks { position: absolute; left: 0; top: 0; pointer-events: none; }
.marks ellipse { fill: none; stroke: #ee22ee; stroke-width: 3; }
```
